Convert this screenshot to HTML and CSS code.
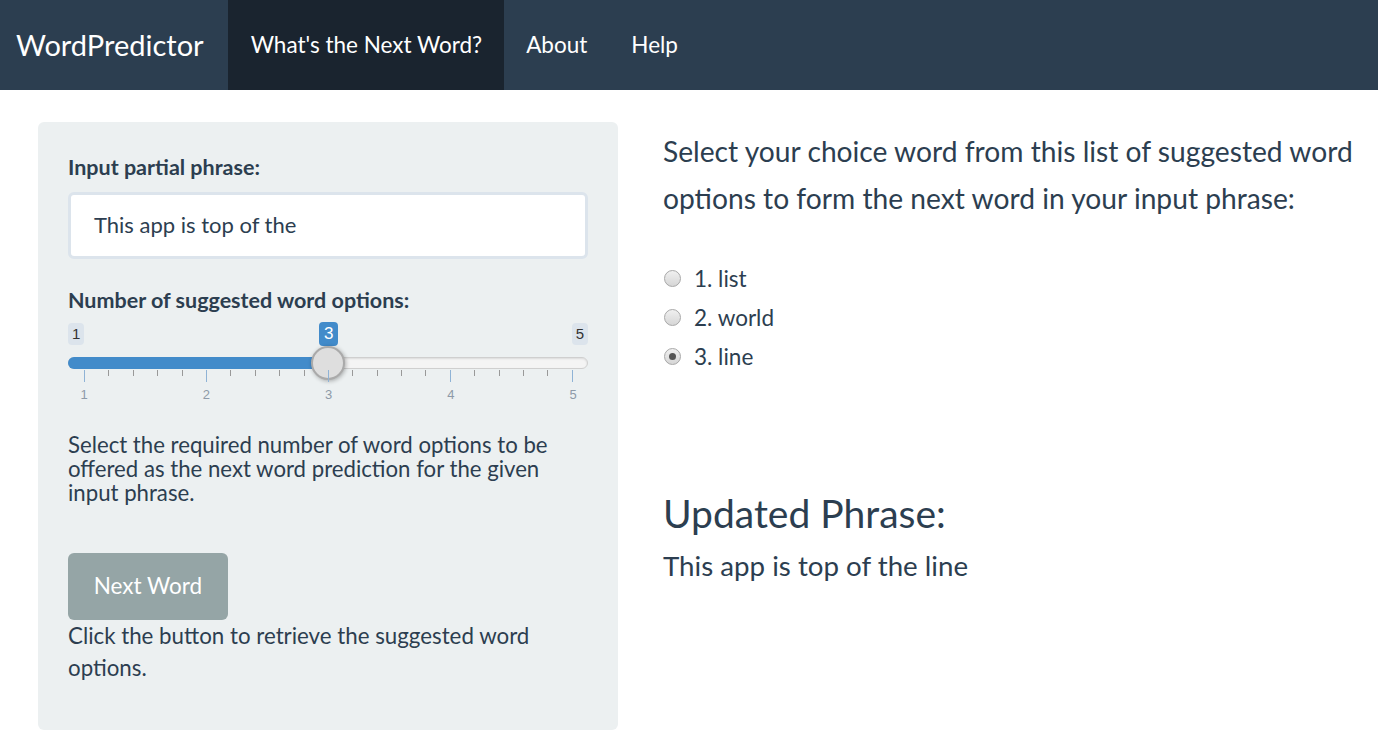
FILE: index.html
```html
<!DOCTYPE html>
<html>
<head>
<meta charset="utf-8">
<link rel="stylesheet" href="styles.css">
</head>
<body>
<nav class="navbar">
  <div class="brand">WordPredictor</div>
  <ul class="nav">
    <li class="active">What's the Next Word?</li>
    <li>About</li>
    <li>Help</li>
  </ul>
</nav>
<div class="page">
  <div class="well">
    <div class="label">Input partial phrase:</div>
    <div class="input">This app is top of the</div>
    <div class="label label2">Number of suggested word options:</div>
    <div class="slider">
      <div class="minmax">
        <span class="mm">1</span>
        <span class="mm">5</span>
      </div>
      <span class="single">3</span>
      <div class="track"><div class="fill"></div></div>
      <div class="handle"></div>
      <div class="ticks">
        <span class="t major"></span><span class="t"></span><span class="t"></span><span class="t"></span><span class="t"></span>
        <span class="t major"></span><span class="t"></span><span class="t"></span><span class="t"></span><span class="t"></span>
        <span class="t major"></span><span class="t"></span><span class="t"></span><span class="t"></span><span class="t"></span>
        <span class="t major"></span><span class="t"></span><span class="t"></span><span class="t"></span><span class="t"></span>
        <span class="t major"></span>
      </div>
      <div class="ticklabels">
        <span>1</span><span>2</span><span>3</span><span>4</span><span>5</span>
      </div>
    </div>
    <p class="help">Select the required number of word options to be offered as the next word prediction for the given input phrase.</p>
    <div class="btn">Next Word</div>
    <p class="click">Click the button to retrieve the suggested word options.</p>
  </div>
  <div class="main">
    <p class="lead">Select your choice word from this list of suggested word options to form the next word in your input phrase:</p>
    <div class="radios">
      <div class="radio"><span class="circle"></span>1. list</div>
      <div class="radio"><span class="circle"></span>2. world</div>
      <div class="radio"><span class="circle checked"></span>3. line</div>
    </div>
    <h3 class="updated">Updated Phrase:</h3>
    <div class="phrase">This app is top of the line</div>
  </div>
</div>
</body>
</html>
```
FILE: styles.css
```css
* { box-sizing: border-box; }
html, body { margin: 0; padding: 0; background: #fff; }
body {
  font-family: Lato, "Open Sans", "Liberation Sans", sans-serif;
  color: #2c3e50;
  font-size: 22px;
  width: 1378px;
  height: 742px;
  overflow: hidden;
}
.navbar {
  height: 90px;
  background: #2c3e50;
  display: flex;
  align-items: stretch;
  color: #fff;
}
.brand {
  font-size: 29px;
  padding: 0 24px 2px 16px;
  display: flex;
  align-items: center;
}
.nav {
  list-style: none;
  margin: 0;
  padding: 0;
  display: flex;
}
.nav li {
  font-size: 22.5px;
  padding: 0 22px 2px 22px;
  display: flex;
  align-items: center;
}
.nav li.active { background: #1a242f; padding: 0 22px 2px 23px; }
.page {
  display: flex;
  padding: 32px 0 0 38px;
  gap: 45px;
}
.well {
  width: 580px;
  height: 608px;
  background: #ecf0f1;
  border-radius: 6px;
  padding: 28px 30px 0 30px;
}
.label {
  font-weight: bold;
  font-size: 21.5px;
  line-height: 32px;
  margin-top: 1px;
}
.input {
  margin-top: 9px;
  height: 67px;
  border: 3px solid #dce4ec;
  border-radius: 6px;
  background: #fff;
  padding: 0 23px;
  display: flex;
  align-items: center;
  font-size: 22px;
  padding-bottom: 3px;
}
.label2 { margin-top: 25px; }
.slider {
  position: relative;
  height: 120px;
  margin-top: 0px;
}
.minmax {
  display: flex;
  justify-content: space-between;
  padding-top: 7px;
}
.mm {
  background: #dce4ec;
  color: #333;
  font-size: 15px;
  line-height: 22px;
  padding: 0 4px;
  border-radius: 4px;
  font-family: "Liberation Sans", Arial, sans-serif;
}
.single {
  position: absolute;
  left: 251px;
  top: 6px;
  background: #428bca;
  color: #fff;
  font-size: 17px;
  line-height: 24px;
  padding: 0 5px;
  border-radius: 4px;
  font-family: "Liberation Sans", Arial, sans-serif;
}
.track {
  position: absolute;
  left: 0;
  right: 0;
  top: 41px;
  height: 12px;
  border-radius: 6px;
  background: #f4f4f4;
  border: 1px solid #cfcfcf;
  box-shadow: inset 0 1px 2px rgba(0,0,0,0.1);
}
.fill {
  position: absolute;
  left: -1px;
  top: -1px;
  bottom: -1px;
  width: 262px;
  background: #428bca;
  border-radius: 6px 0 0 6px;
}
.handle {
  position: absolute;
  left: 243px;
  top: 30px;
  width: 34px;
  height: 34px;
  border-radius: 50%;
  background: #dedede;
  border: 2px solid #aaa;
  box-shadow: 1px 1px 4px rgba(0,0,0,0.3);
}
.ticks {
  position: absolute;
  left: 16px;
  right: 15px;
  top: 54px;
  display: flex;
  justify-content: space-between;
}
.t {
  width: 1px;
  height: 6px;
  background: #999;
}
.t.major {
  height: 12px;
  background: #8fb3d6;
}
.ticklabels {
  position: absolute;
  left: 10px;
  right: 9px;
  top: 71px;
  display: flex;
  justify-content: space-between;
  font-size: 13px;
  color: #8e9aa8;
  font-family: "Liberation Sans", Arial, sans-serif;
}
.ticklabels span { width: 12px; text-align: center; }
.help {
  margin: -3px 0 0 0;
  font-size: 22.2px;
  line-height: 24px;
  padding-right: 20px;
}
.btn {
  margin-top: 48px;
  width: 160px;
  height: 67px;
  background: #95a5a6;
  color: #fff;
  border-radius: 6px;
  display: flex;
  align-items: center;
  justify-content: center;
  font-size: 22.5px;
  padding-bottom: 3px;
}
.click {
  margin: 0;
  font-size: 22.3px;
  line-height: 32px;
  padding-top: 0;
}
.main {
  width: 710px;
  padding-top: 0;
}
.lead {
  margin: 6px 0 0 0;
  font-size: 28.2px;
  line-height: 47px;
}
.radios { margin-top: 37px; }
.radio {
  display: flex;
  align-items: center;
  height: 39px;
  font-size: 22.5px;
  padding-left: 1px;
}
.circle {
  width: 17px;
  height: 17px;
  border-radius: 50%;
  background: linear-gradient(#f0f0f0, #d6d6d6);
  border: 1px solid #a8a8a8;
  margin-right: 13px;
  position: relative;
}
.circle.checked::after {
  content: "";
  position: absolute;
  left: 4px;
  top: 4px;
  width: 7px;
  height: 7px;
  border-radius: 50%;
  background: #555;
}
.updated {
  margin: 115px 0 0 0;
  font-weight: normal;
  font-size: 39px;
  line-height: 44px;
}
.phrase {
  margin-top: 13px;
  font-size: 27.7px;
  line-height: 36px;
}
```
